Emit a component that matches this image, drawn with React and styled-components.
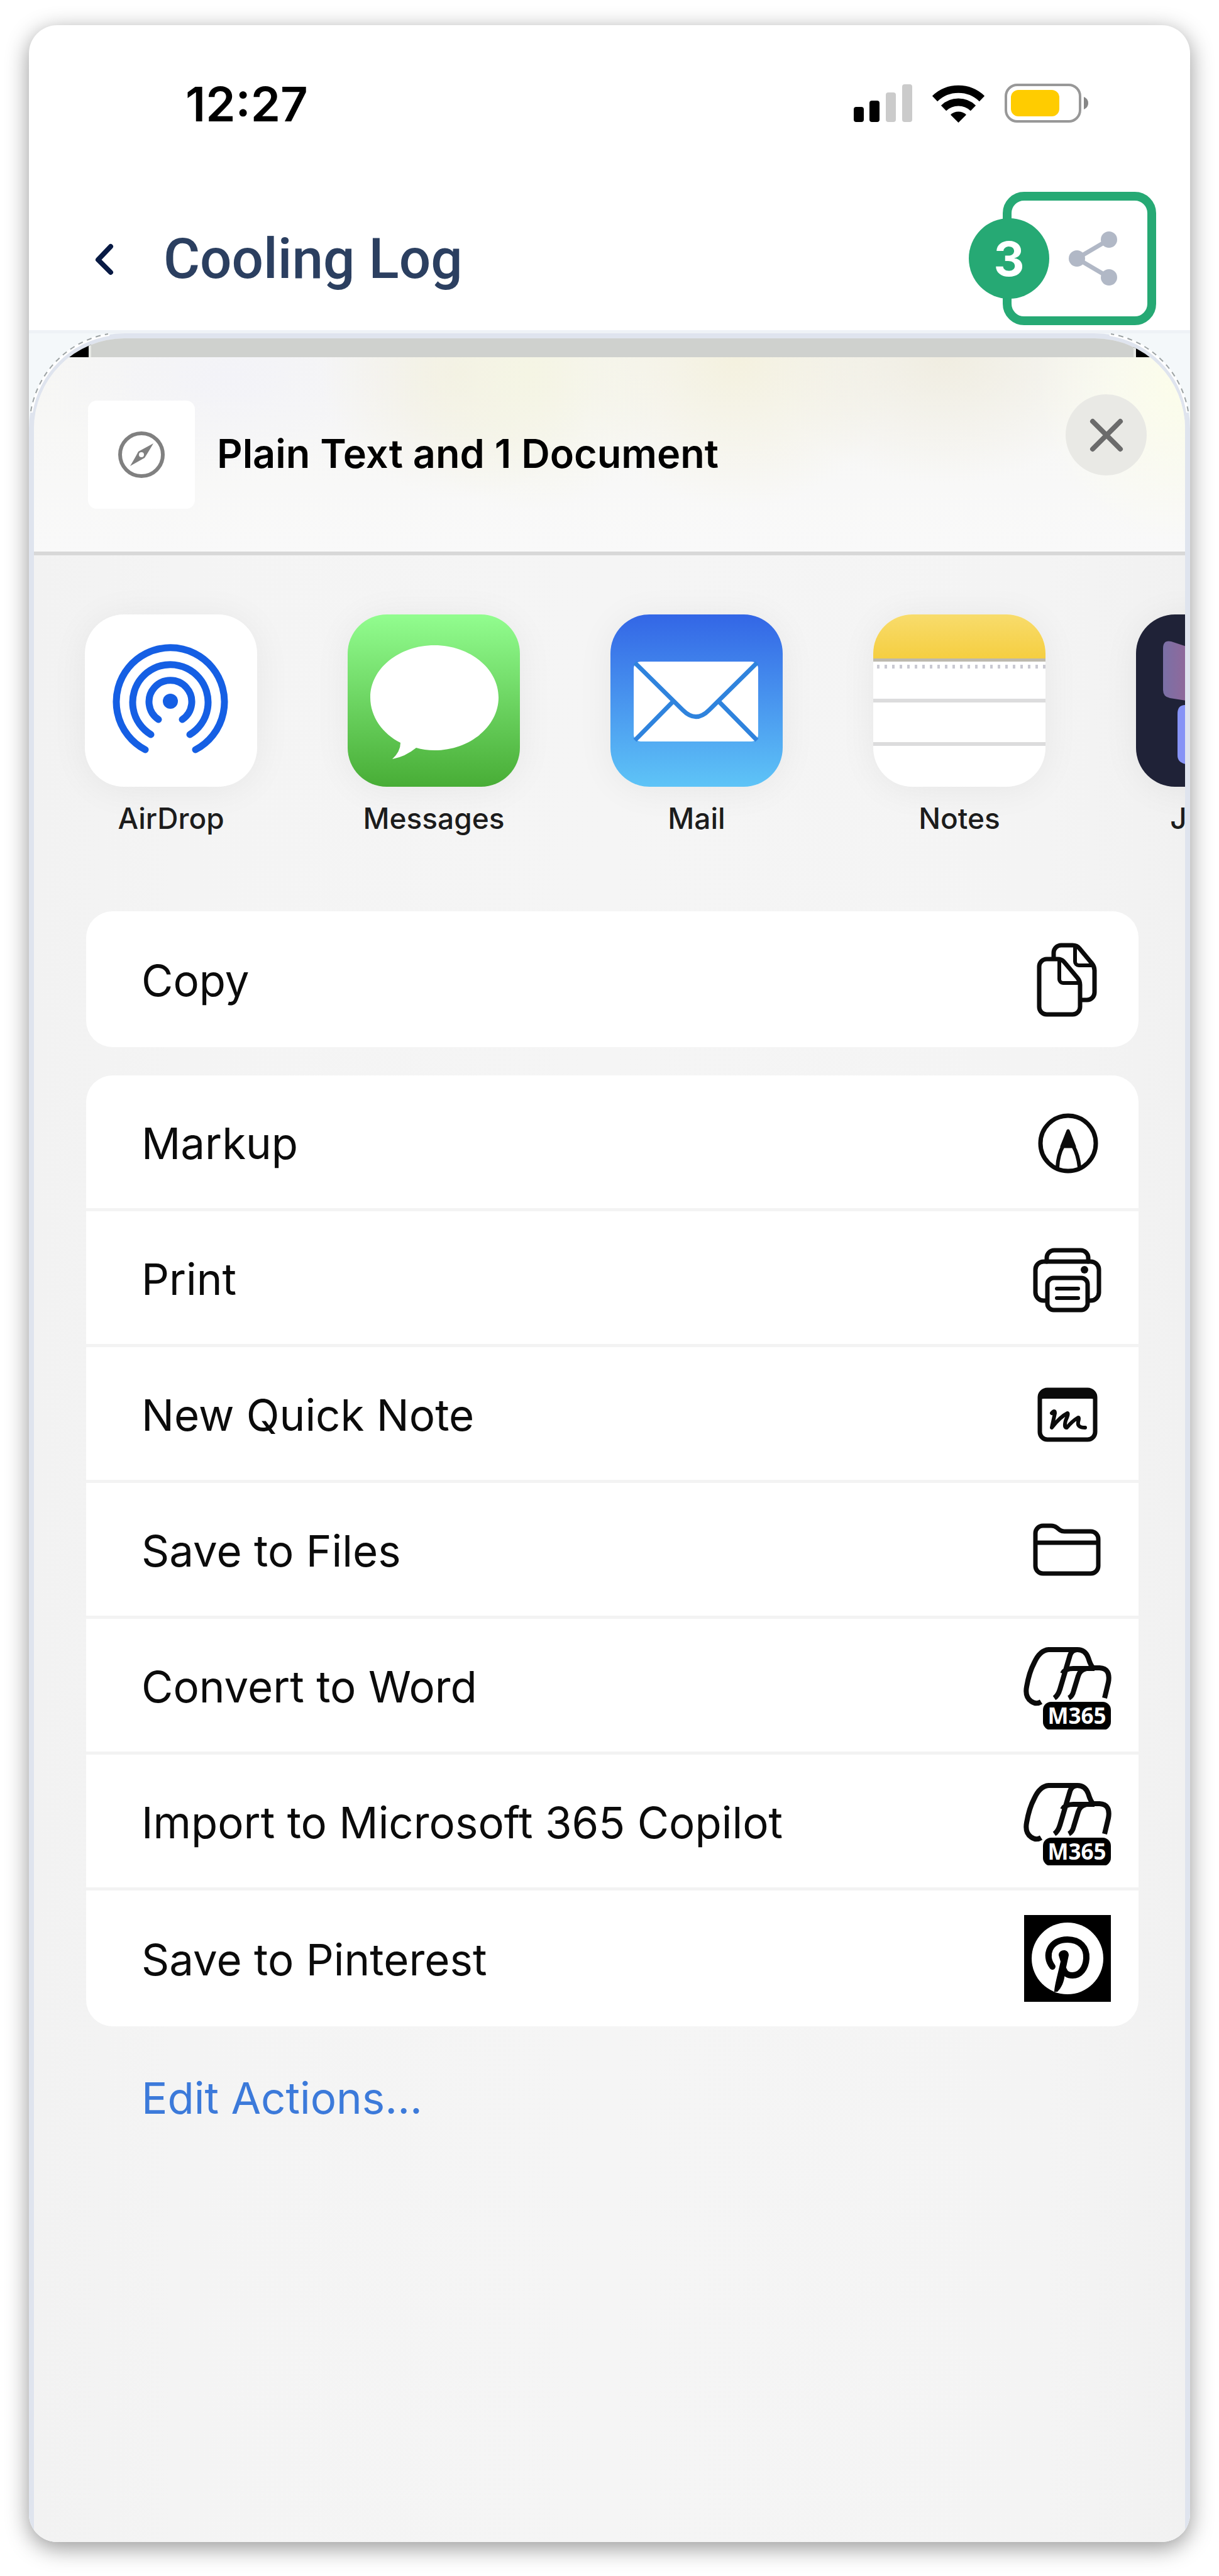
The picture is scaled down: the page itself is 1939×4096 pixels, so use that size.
import React from "react";
import styled, { createGlobalStyle } from "styled-components";

const GlobalStyle = createGlobalStyle`
  *, *::before, *::after { box-sizing: border-box; }
  body { margin: 0; background: #fff; font-family: Inter, "Liberation Sans", sans-serif; color: #0b0b0b; }
  ul { list-style: none; margin: 0; padding: 0; }
  h1, h2, p { margin: 0; }
  button { font: inherit; color: inherit; background: none; border: 0; padding: 0; cursor: pointer; }
  svg { display: block; flex: none; }
`;

const Page = styled.div`
  min-height: 100vh;
  padding: 40px 46px 54px;
  display: flex;
`;

const Phone = styled.main`
  flex: 1;
  min-width: 0;
  display: flex;
  flex-direction: column;
  background: #fff;
  border-radius: 45px;
  overflow: hidden;
  box-shadow: 0 9px 36px rgba(0, 0, 0, 0.42);
`;

const StatusBar = styled.div`
  height: 248px;
  padding: 0 162px 0 249px;
  display: flex;
  align-items: center;
  justify-content: space-between;
`;

const Clock = styled.time`
  padding-top: 2px;
  font-size: 76px;
  line-height: 90px;
  font-weight: 600;
  color: #000;
`;

const StatusIcons = styled.div`
  display: flex;
  align-items: center;
  gap: 32px;
`;

const NavBar = styled.header`
  height: 242px;
  padding: 8px 54px 0 96px;
  display: flex;
  align-items: center;
  border-bottom: 5px solid #eef2f6;
`;

const BackButton = styled.button`
  width: 46px;
  height: 70px;
`;

const Title = styled.h1`
  flex: 1;
  padding: 2px 0 0 72px;
  font-family: Roboto, "Liberation Sans", sans-serif;
  font-size: 89px;
  line-height: 100px;
  font-weight: 500;
  color: #2b3f60;
`;

const Highlight = styled.div`
  position: relative;
  width: 244px;
  height: 212px;
  border: 14px solid #26a974;
  border-radius: 34px;
`;

const ShareButton = styled.button`
  width: 100%;
  height: 100%;
  display: flex;
  align-items: center;
  justify-content: center;
  padding-left: 44px;
`;

const StepBadge = styled.span`
  position: absolute;
  left: -68px;
  top: 28px;
  width: 128px;
  height: 128px;
  border-radius: 50%;
  background: #26a974;
  color: #fff;
  font-size: 76px;
  line-height: 128px;
  font-weight: 700;
  text-align: center;
`;

const Backdrop = styled.div`
  position: relative;
  flex: 1;
  display: flex;
  background: #f4f8fa;
`;

const CornerTrace = styled.svg`
  position: absolute;
  top: 0;
  ${(p) => (p.$side === "right" ? "right: 0; transform: scaleX(-1);" : "left: 0;")}
`;

const Sheet = styled.section`
  flex: 1;
  min-width: 0;
  display: flex;
  flex-direction: column;
  border: 8px solid #dfe4ee;
  border-bottom: 0;
  border-radius: 152px 152px 0 0;
  overflow: hidden;
  background: linear-gradient(90deg, #f2f2f2, #f4f4f4 12%, #f5f5f5 50%, #f4f4f4 88%, #f1f1f1);
`;

const BehindStrip = styled.div`
  height: 30px;
  display: flex;
  justify-content: space-between;
  background: #cfd1ce;

  &::before, &::after {
    content: "";
    width: 91px;
    background: #000;
    border: 0 solid #e6e8e4;
    border-right-width: 4px;
  }
  &::after {
    width: 82px;
    border-width: 0 0 0 4px;
  }
`;

const SheetHeader = styled.header`
  display: flex;
  align-items: flex-start;
  height: 315px;
  padding: 69px 61px 0 86px;
  border-bottom: 6px solid #d8d8d8;
  background:
    radial-gradient(ellipse 240px 260px at 100% 12%, #fcfdea, transparent),
    radial-gradient(ellipse 280px 200px at 79% 0, #f0ede1, transparent),
    radial-gradient(ellipse 260px 240px at 61% 0, #f4f1df, transparent),
    radial-gradient(ellipse 220px 220px at 43% 8%, #f5f5e4, transparent),
    radial-gradient(ellipse 220px 200px at 37% 8%, #f2efe3, transparent),
    radial-gradient(ellipse 300px 160px at 17% 10%, #f3f3f8, transparent),
    linear-gradient(#f6f6f4, #f9f9f9);
`;

const Thumbnail = styled.div`
  width: 170px;
  height: 172px;
  border-radius: 14px;
  background: #fff;
  display: flex;
  align-items: center;
  justify-content: center;
`;

const SheetTitle = styled.h2`
  flex: 1;
  padding-left: 35px;
  font-size: 63px;
  line-height: 168px;
  font-weight: 600;
  color: #000;
`;

const CloseButton = styled.button`
  width: 129px;
  height: 129px;
  margin-top: -10px;
  border-radius: 50%;
  background: #e9e9e5;
  display: flex;
  align-items: center;
  justify-content: center;
`;

const AppRow = styled.ul`
  display: flex;
  gap: 144px;
  padding: 94px 0 118px 81px;
  overflow: hidden;
`;

const AppButton = styled.button`
  display: flex;
  flex-direction: column;
  align-items: center;
  gap: 20px;
  width: 274px;
  font-size: 46px;
  line-height: 60px;
  font-weight: 500;
  color: #1c1c1c;
`;

const AppTile = styled.span`
  width: 274px;
  height: 274px;
  border-radius: 62px;
  overflow: hidden;
  background: ${(p) => p.$fill};
  box-shadow: 0 4px 60px rgba(0, 0, 0, 0.06);
`;

const ActionGroup = styled.ul`
  margin: 0 74px 45px 83px;
  border-radius: 42px;
  overflow: hidden;
  background: #fff;

  &:last-of-type { margin-bottom: 6px; }
`;

const ActionItem = styled.li`
  height: 216px;
  border-bottom: 5px solid #f3f3f3;

  &:last-child { border-bottom: 0; }
`;

const ActionButton = styled.button`
  width: 100%;
  height: 100%;
  padding: 0 43px 0 88px;
  display: flex;
  align-items: center;
  justify-content: space-between;
  text-align: left;
`;

const ActionLabel = styled.span`
  padding-top: 4px;
  font-size: 69px;
  line-height: 90px;
`;

const EditLink = styled.a`
  align-self: flex-start;
  margin-left: 171px;
  font-size: 69px;
  line-height: 216px;
  color: #3c7ada;
  text-decoration: none;
`;

const Glyph = ({ children }) => (
  <svg width="140" height="140" viewBox="0 0 140 140" fill="none" stroke="#0b0b0b" strokeWidth="7" strokeLinecap="round" strokeLinejoin="round" aria-hidden="true">
    {children}
  </svg>
);

const CopyGlyph = () => (
  <Glyph>
    <path d="M48 36V28a12 12 0 0 1 12-12H78q7 0 11 5L109 45q4 5 4 11V91a12 12 0 0 1-12 12H93" />
    <path d="M82 19V42a6 6 0 0 0 6 6H111" strokeWidth="6" />
    <path d="M37 38H55q6 0 10 5L86 68q4 5 4 11V114a12 12 0 0 1-12 12H37a12 12 0 0 1-12-12V50a12 12 0 0 1 12-12z" />
    <path d="M57 41V70a6 6 0 0 0 6 6H88" strokeWidth="6" />
  </Glyph>
);

const MarkupGlyph = () => (
  <Glyph>
    <circle cx="71" cy="72" r="44" />
    <path d="M54 110Q55 90 63 76L71 54L79 76Q87 90 89 110" strokeWidth="6" />
    <path d="M71 52L61 77H81z" fill="#0b0b0b" strokeWidth="5" />
  </Glyph>
);

const PrintGlyph = () => (
  <Glyph>
    <path d="M37 44V38a12 12 0 0 1 12-12H91a12 12 0 0 1 12 12V44" />
    <path d="M37 106H32a13 13 0 0 1-13-13V57a13 13 0 0 1 13-13H107a13 13 0 0 1 13 13V93a13 13 0 0 1-13 13H103" />
    <rect x="38" y="70" width="64" height="51" rx="10" />
    <path d="M53 87H87M53 102H87" strokeWidth="6" />
    <circle cx="97" cy="57" r="6" fill="#0b0b0b" stroke="none" />
  </Glyph>
);

const QuickNoteGlyph = () => (
  <Glyph>
    <rect x="26" y="32" width="88" height="79" rx="12" />
    <path d="M23 51V43a13 13 0 0 1 13-13H104a13 13 0 0 1 13 13V51q-3-5-10-5H33q-7 0-10 5z" fill="#0b0b0b" stroke="none" />
    <path d="M45 69Q50 63 50 69L45 92Q58 75 70 69Q72 70 67 81Q64 93 69 92Q77 82 87 76Q89 76 87 83Q85 92 98 92" strokeWidth="6" />
  </Glyph>
);

const FolderGlyph = () => (
  <Glyph>
    <path d="M19 96V44a12 12 0 0 1 12-12H44q5 0 9 3l5 4q3 2 7 2H107a12 12 0 0 1 12 12V96a12 12 0 0 1-12 12H31a12 12 0 0 1-12-12zM20 59H118" />
  </Glyph>
);

const BadgeText = styled.text`
  font-family: "Open Sans", "Noto Sans", sans-serif;
  font-size: 35px;
  font-weight: 700;
`;

const M365Glyph = () => (
  <Glyph>
    <g strokeWidth="8" strokeLinecap="butt">
      <path d="M28 96Q20 101 12 95Q2 88 5 72Q9 49 17 34Q26 14 40 13H84Q98 12 103 26Q107 39 111 42H121Q139 43 135 65L129 90" />
      <path d="M86 13Q77 13 74 22L58 76Q55 86 49 90M62 51Q66 43 79 43H113M100 43Q90 45 87 55L80 78Q78 87 72 90" />
    </g>
    <rect x="31" y="96" width="108" height="45" rx="13" fill="#000" stroke="none" />
    <BadgeText x="85" y="131" textAnchor="middle" fill="#fff" stroke="none">M365</BadgeText>
  </Glyph>
);

const PinterestGlyph = () => (
  <Glyph>
    <rect x="1" y="1" width="138" height="138" fill="#000" stroke="none" />
    <circle cx="70" cy="70" r="57" fill="#fff" stroke="none" />
    <path d="M46 83C32 65 42 40 70 40C90 40 101 53 100 70C99 86 90 97 78 97C71 97 66 94 64 88" stroke="#000" strokeWidth="10" />
    <path d="M56 65C56 55 72 54 72 65L66 93C65 108 60 117 54 123H49C49 115 54 97 59 75z" fill="#000" stroke="none" />
  </Glyph>
);

const AirDropArt = () => (
  <svg width="274" height="274" viewBox="0 0 274 274" fill="none" stroke="#155fe4" strokeWidth="11" strokeLinecap="round" aria-hidden="true">
    <path d="M96 215A86 86 0 1 1 176 215" />
    <path d="M105 191A60 60 0 1 1 167 191" />
    <path d="M117 167A34 34 0 1 1 155 167" />
    <circle cx="136" cy="138" r="12" fill="#155fe4" stroke="none" />
  </svg>
);

const MessagesArt = () => (
  <svg width="274" height="274" viewBox="0 0 274 274" fill="#fff" aria-hidden="true">
    <path d="M138 49C194 49 240 86 240 132S194 216 138 216Q122 216 109 212Q92 226 71 230Q84 218 84 204C56 190 36 163 36 132C36 86 82 49 138 49z" />
  </svg>
);

const MailArt = () => (
  <svg width="274" height="274" viewBox="0 0 274 274" aria-hidden="true">
    <rect x="37" y="75" width="198" height="127" rx="11" fill="#fff" />
    <g fill="none" stroke="#2f83dd" strokeWidth="7">
      <path d="M39 77L115 152Q136 173 157 152L233 77M39 200L100 138M233 200L172 138" />
    </g>
  </svg>
);

const NotesArt = () => (
  <svg width="274" height="274" viewBox="0 0 274 274" aria-hidden="true">
    <defs>
      <linearGradient id="notesTop" x1="0" y1="0" x2="0" y2="1">
        <stop offset="0" stopColor="#f8dc6c" />
        <stop offset="1" stopColor="#f5ce40" />
      </linearGradient>
    </defs>
    <rect width="274" height="71" fill="url(#notesTop)" />
    <rect y="70" width="274" height="5" fill="#bdb9ae" />
    <path d="M6 83H274" stroke="#c9c9d2" strokeWidth="6" strokeDasharray="4 8" />
    <path d="M0 137H274M0 206H274" stroke="#dcdcdd" strokeWidth="6" />
  </svg>
);

const JournalArt = () => (
  <svg width="274" height="274" viewBox="0 0 274 274" aria-hidden="true">
    <defs>
      <linearGradient id="journalPage" x1="0" y1="0" x2="1" y2="0">
        <stop offset="0" stopColor="#7a70a6" />
        <stop offset="1" stopColor="#a8618e" />
      </linearGradient>
    </defs>
    <path d="M43 54Q43 40 56 43L120 64V143L54 133Q43 131 43 120z" fill="url(#journalPage)" />
    <path d="M66 158Q66 144 78 144H130V238H80Q66 236 66 224z" fill="#8693f6" />
  </svg>
);

const SignalIcon = () => (
  <svg width="93" height="60" viewBox="0 0 93 60" aria-hidden="true">
    <rect x="0" y="36" width="16" height="24" rx="4" />
    <rect x="25" y="26" width="16" height="34" rx="4" />
    <rect x="51" y="13" width="16" height="47" rx="4" fill="#cbcbcb" />
    <rect x="77" y="0" width="16" height="60" rx="4" fill="#cbcbcb" />
  </svg>
);

const WifiIcon = () => (
  <svg width="83" height="61" viewBox="0 0 83 61" aria-hidden="true">
    <g fill="none" stroke="#000" strokeWidth="12">
      <path d="M4 23A54 54 0 0 1 79 23" />
      <path d="M18 38A34 34 0 0 1 65 38" />
    </g>
    <path d="M41.500 61L29 48.500A18 18 0 0 1 54 48.500z" />
  </svg>
);

const BatteryIcon = () => (
  <svg width="133" height="62" viewBox="0 0 133 62" aria-hidden="true">
    <rect x="2" y="2" width="118" height="58" rx="18" fill="none" stroke="#989898" strokeWidth="4" />
    <rect x="10" y="10" width="77" height="42" rx="12" fill="#ffcc00" />
    <path d="M126 21Q133 24 133 31T126 41z" fill="#868686" />
  </svg>
);

const apps = [
  { name: "AirDrop", fill: "#fff", Art: AirDropArt },
  { name: "Messages", fill: "linear-gradient(#92fd8f, #48ad36)", Art: MessagesArt },
  { name: "Mail", fill: "linear-gradient(#3366e6, #5ec4f7)", Art: MailArt },
  { name: "Notes", fill: "#fff", Art: NotesArt },
  { name: "Journal", fill: "#1f2237", Art: JournalArt },
];

const groups = [
  [{ label: "Copy", Icon: CopyGlyph }],
  [
    { label: "Markup", Icon: MarkupGlyph },
    { label: "Print", Icon: PrintGlyph },
    { label: "New Quick Note", Icon: QuickNoteGlyph },
    { label: "Save to Files", Icon: FolderGlyph },
    { label: "Convert to Word", Icon: M365Glyph },
    { label: "Import to Microsoft 365 Copilot", Icon: M365Glyph },
    { label: "Save to Pinterest", Icon: PinterestGlyph },
  ],
];

const Trace = ({ side }) => (
  <CornerTrace $side={side} width="150" height="150" viewBox="0 0 150 150" fill="none" aria-hidden="true">
    <path d="M4 126A150 150 0 0 1 128 2" stroke="#fff" strokeWidth="4" />
    <path d="M3 124A150 150 0 0 1 126 1" stroke="#9da3a4" strokeWidth="2" strokeDasharray="8 7" />
  </CornerTrace>
);

export default function App() {
  return (
    <>
      <GlobalStyle />
      <Page>
        <Phone>
          <StatusBar>
            <Clock>12:27</Clock>
            <StatusIcons>
              <SignalIcon />
              <WifiIcon />
              <BatteryIcon />
            </StatusIcons>
          </StatusBar>
          <NavBar>
            <BackButton aria-label="Back">
              <svg width="46" height="70" viewBox="0 0 46 70" fill="none" stroke="#081a44" strokeWidth="8" strokeLinecap="round" strokeLinejoin="round">
                <path d="M34 16L14 37L34 57" />
              </svg>
            </BackButton>
            <Title>Cooling Log</Title>
            <Highlight>
              <ShareButton aria-label="Share">
                <svg width="78" height="86" viewBox="0 0 78 86" fill="#b1b8c6">
                  <path d="M64 13L13 43L64 73" fill="none" stroke="#b1b8c6" strokeWidth="7" />
                  <circle cx="64" cy="13" r="13" />
                  <circle cx="13" cy="43" r="13" />
                  <circle cx="64" cy="73" r="13" />
                </svg>
              </ShareButton>
              <StepBadge>3</StepBadge>
            </Highlight>
          </NavBar>
          <Backdrop>
            <Sheet aria-label="Share sheet">
              <BehindStrip />
              <SheetHeader>
                <Thumbnail>
                  <svg width="76" height="76" viewBox="0 0 76 76" fill="none" stroke="#808080" strokeWidth="6" aria-hidden="true">
                    <circle cx="38" cy="38" r="34" />
                    <path d="M57 20L33 33Q29 41 20 56L43 43Q47 37 57 20z" fill="#808080" stroke="none" />
                    <circle cx="38" cy="38" r="4" fill="#fff" stroke="none" />
                  </svg>
                </Thumbnail>
                <SheetTitle>Plain Text and 1 Document</SheetTitle>
                <CloseButton aria-label="Close">
                  <svg width="54" height="54" viewBox="0 0 54 54" stroke="#6b6b6b" strokeWidth="8" strokeLinecap="round">
                    <path d="M5 5L49 49M49 5L5 49" />
                  </svg>
                </CloseButton>
              </SheetHeader>
              <AppRow>
                {apps.map(({ name, fill, Art }) => (
                  <li key={name}>
                    <AppButton>
                      <AppTile $fill={fill}><Art /></AppTile>
                      {name}
                    </AppButton>
                  </li>
                ))}
              </AppRow>
              {groups.map((group) => (
                <ActionGroup key={group[0].label}>
                  {group.map(({ label, Icon }) => (
                    <ActionItem key={label}>
                      <ActionButton>
                        <ActionLabel>{label}</ActionLabel>
                        <Icon />
                      </ActionButton>
                    </ActionItem>
                  ))}
                </ActionGroup>
              ))}
              <EditLink href="#edit-actions">Edit Actions...</EditLink>
            </Sheet>
            <Trace side="left" />
            <Trace side="right" />
          </Backdrop>
        </Phone>
      </Page>
    </>
  );
}
